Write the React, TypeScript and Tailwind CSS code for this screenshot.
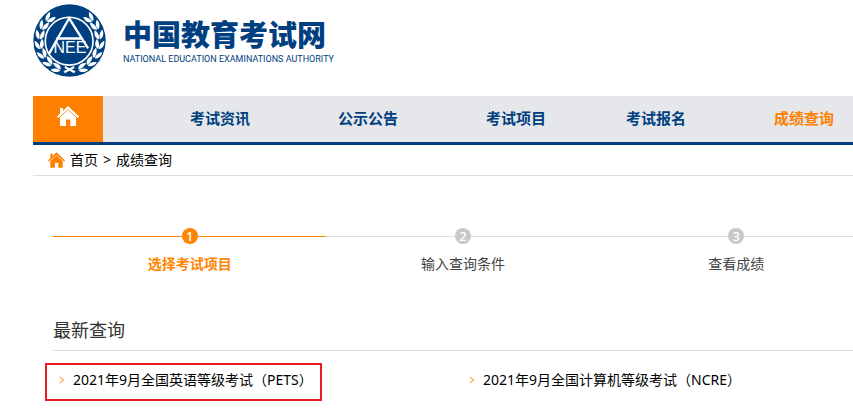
const navItems = [
  { label: "考试资讯", active: false },
  { label: "公示公告", active: false },
  { label: "考试项目", active: false },
  { label: "考试报名", active: false },
  { label: "成绩查询", active: true },
];

const steps = [
  { label: "选择考试项目", active: true },
  { label: "输入查询条件", active: false },
  { label: "查看成绩", active: false },
];

const exams = [
  { name: "2021年9月全国英语等级考试（PETS）", marked: true },
  { name: "2021年9月全国计算机等级考试（NCRE）", marked: false },
];

// leaf angles around the emblem ring, measured from the bottom
const leaves = [22, 41, 60, 79, 98, 117, 135];

function Emblem() {
  return (
    <svg viewBox="0 0 220 220" className="h-[73px] w-[73px] shrink-0" role="img" aria-label="NEEA">
      <circle cx="110" cy="110" r="109" fill="#004080" />
      <circle cx="109" cy="112" r="72" fill="none" stroke="#fff" strokeWidth="5" />
      {[1, -1].map((side) => (
        <g key={side} transform={`translate(110 111) scale(${side} 1)`} fill="#fff">
          {leaves.map((a) => (
            <g key={a} transform={`rotate(${-a}) translate(0 89)`}>
              <path d="M-8 1 C-3 -12 8 -14 22 -9 C15 -1 4 3 -8 1Z" />
              <path d="M-8 4 C0 0 12 3 20 14 C8 17 -3 14 -8 4Z" />
            </g>
          ))}
          <path d="M-13 76 L18 92 L14 98 L-15 82Z" />
        </g>
      ))}
      <path d="M49 149 L109 43 L166 134 M70 104 H147" fill="none" stroke="#fff" strokeWidth="7" />
      <text x="62" y="149" fill="#fff" fontSize="48" fontFamily="Liberation Sans, sans-serif">
        NEE
      </text>
    </svg>
  );
}

function HomeIcon({ className }: { className: string }) {
  return (
    <svg viewBox="0 0 22 20" className={className} fill="currentColor" aria-hidden="true">
      <path d="M11 0 L22 10.500 L20.800 12 L11 3.200 L1.200 12 L0 10.500 L3 7.600 V2 H6 V4.700Z" />
      <path d="M11 4 L19 11.200 V20 H13.300 V13.500 H9 V20 H3 V11.200Z" />
    </svg>
  );
}

export default function App() {
  return (
    <div className="overflow-hidden bg-white pb-4 pl-[33px] font-['Noto_Sans','Noto_Sans_CJK_SC',sans-serif] text-sm text-black">
      <header className="flex items-center gap-[17px] pt-1 pb-[19px]">
        <Emblem />
        <div className="text-[#004080]">
          <h1 className="font-['Noto_Sans_CJK_SC',sans-serif] text-[29px] leading-8 font-black">中国教育考试网</h1>
          <p className="mt-1 font-['Roboto',sans-serif] text-[9px] leading-3">
            NATIONAL EDUCATION EXAMINATIONS AUTHORITY
          </p>
        </div>
      </header>

      <nav className="flex h-[49px] border-b-3 border-[#004080] bg-[#e6e7eb]">
        <a href="#" aria-label="首页" className="flex w-[70px] shrink-0 justify-center bg-[#ff8000] pt-2.5 text-white">
          <HomeIcon className="h-5 w-[22px]" />
        </a>
        <ul className="grid flex-1 grid-cols-[148fr_148fr_140fr_148fr_79fr] items-center pl-[87px] text-[15px] font-bold">
          {navItems.map((item) => (
            <li key={item.label}>
              <a href="#" className={item.active ? "whitespace-nowrap text-[#ff8000]" : "whitespace-nowrap text-[#004080]"}>
                {item.label}
              </a>
            </li>
          ))}
        </ul>
      </nav>

      <div className="flex h-[31px] items-center gap-[5px] border-b border-[#dddddd] pl-[15px]">
        <HomeIcon className="h-4 w-[17px] text-[#ff8000]" />
        <a href="#">首页</a>
        <span>&gt;</span>
        <a href="#">成绩查询</a>
      </div>

      <main className="-mr-5 pl-5">
        <ol className="grid grid-cols-3 pt-[52px]">
          {steps.map((step, i) => (
            <li key={step.label} className="flex flex-col items-center gap-2">
              <div className="flex w-full items-center">
                <span className={step.active ? "h-px flex-1 bg-[#ff8500]" : "h-px flex-1 bg-[#dddddd]"} />
                <span
                  className={
                    step.active
                      ? "flex h-4 w-4 items-center justify-center rounded-full bg-[#ff8500] text-[13px] leading-4 font-medium text-white"
                      : "flex h-4 w-4 items-center justify-center rounded-full bg-[#c8c8c8] text-[13px] leading-4 font-medium text-white"
                  }
                >
                  {i + 1}
                </span>
                <span className={step.active ? "h-px flex-1 bg-[#ff8500]" : "h-px flex-1 bg-[#dddddd]"} />
              </div>
              <span className={step.active ? "leading-6 font-bold text-[#ff8500]" : "leading-6 text-[#444444]"}>
                {step.label}
              </span>
            </li>
          ))}
        </ol>

        <section className="pt-10">
          <h2 className="border-b border-[#dddddd] pb-1.5 text-lg text-[#333333]">最新查询</h2>
          <ul className="grid grid-cols-2 pt-3">
            {exams.map((exam) => (
              <li key={exam.name}>
                <a
                  href="#"
                  className={
                    exam.marked
                      ? "-ml-2 inline-flex h-[38px] items-center gap-2 border-2 border-[#ed1c24] pr-[7px] pb-1 pl-3 whitespace-nowrap"
                      : "-ml-2 inline-flex h-[38px] items-center gap-2 border-2 border-transparent pr-[7px] pb-1 pl-3 whitespace-nowrap"
                  }
                >
                  <svg viewBox="0 0 6 8" className="h-2 w-1.5" fill="none" stroke="#f7b768" strokeWidth="1.5" aria-hidden="true">
                    <path d="M1 1 L4.500 4 L1 7" />
                  </svg>
                  {exam.name}
                </a>
              </li>
            ))}
          </ul>
        </section>
      </main>
    </div>
  );
}
